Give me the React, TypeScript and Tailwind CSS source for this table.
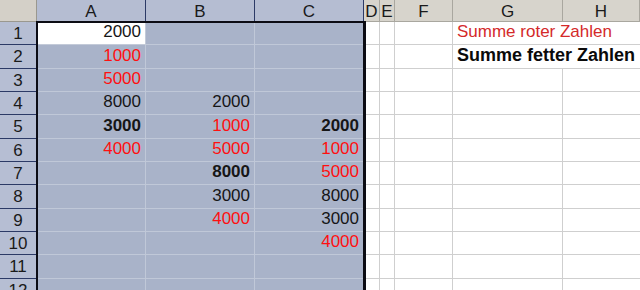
import React from "react";

type Val = { v: string; red?: boolean; bold?: boolean };

const cols = ["A", "B", "C", "D", "E", "F", "G", "H"];

// values for columns A..C, rows 1..12
const data: Record<number, (Val | null)[]> = {
  1: [{ v: "2000" }, null, null],
  2: [{ v: "1000", red: true }, null, null],
  3: [{ v: "5000", red: true }, null, null],
  4: [{ v: "8000" }, { v: "2000" }, null],
  5: [{ v: "3000", bold: true }, { v: "1000", red: true }, { v: "2000", bold: true }],
  6: [{ v: "4000", red: true }, { v: "5000", red: true }, { v: "1000", red: true }],
  7: [null, { v: "8000", bold: true }, { v: "5000", red: true }],
  8: [null, { v: "3000" }, { v: "8000" }],
  9: [null, { v: "4000", red: true }, { v: "3000" }],
  10: [null, null, { v: "4000", red: true }],
  11: [null, null, null],
  12: [null, null, null],
};

function Num({ val }: { val: Val | null }) {
  if (!val) return null;
  return (
    <span
      className={
        (val.red ? "text-[#ff1010] " : "text-[#161616] ") +
        (val.bold ? "font-bold" : "")
      }
    >
      {val.v}
    </span>
  );
}

export default function App() {
  const rows = Array.from({ length: 12 }, (_, i) => i + 1);

  return (
    <div
      className="relative h-[290px] w-[640px] overflow-hidden bg-white text-[17px] leading-none"
      style={{ fontFamily: '"Liberation Sans", Arial, sans-serif' }}
    >
      <div className="grid grid-cols-[37px_109px_109px_109px_16px_15px_58px_110px_1fr] grid-rows-[22px_repeat(12,23.333px)]">
        {/* header row */}
        <div className="border-r border-b border-[#9a988f] bg-[#d4d0c8]" />
        {cols.map((c, i) => (
          <div
            key={c}
            className={
              "flex items-center justify-center border-b pt-[1px] " +
              (i < 3
                ? "border-r border-[#2c3a66] bg-[#b5bdd2] text-[#1a1a1a]"
                : "border-r border-[#a9a79f] bg-[#d7d4cc] text-[#1a1a1a]")
            }
          >
            {c}
          </div>
        ))}

        {rows.map((r) => (
          <React.Fragment key={r}>
            <div className="flex items-center justify-center border-r border-b border-[#2c3a66] bg-[#b6bed3] pt-[1px] text-[#1a1a1a]">
              {r}
            </div>
            {[0, 1, 2].map((ci) => (
              <div
                key={ci}
                className={
                  "flex items-end justify-end whitespace-nowrap border-r border-b pr-[4px] pb-[4px] " +
                  (r === 1 && ci === 0
                    ? "border-[#c3cad8] bg-white"
                    : "border-[#c0c8d8] bg-[#a9b3c9]")
                }
              >
                <Num val={data[r][ci]} />
              </div>
            ))}
            <div className="border-r border-b border-[#cfcfcf]" />
            <div className="border-r border-b border-[#cfcfcf]" />
            <div className="border-r border-b border-[#cfcfcf]" />
            <div
              className={
                "flex items-end whitespace-nowrap border-b border-[#cfcfcf] pb-[4px] pl-[4px] " +
                (r <= 2 ? "" : "border-r")
              }
            >
              {r === 1 && <span className="text-[#d42a2a]">Summe roter Zahlen</span>}
              {r === 2 && <span className="text-[18px] font-bold text-[#0a0a0a]">Summe fetter Zahlen</span>}
            </div>
            <div className="border-b border-[#cfcfcf]" />
          </React.Fragment>
        ))}
      </div>

      {/* selection outline A1:C12 */}
      <div className="pointer-events-none absolute top-[21px] left-[36px] h-[300px] w-[330px] border-t-2 border-l-2 border-r-[3px] border-[#0c0c14]" />
    </div>
  );
}
